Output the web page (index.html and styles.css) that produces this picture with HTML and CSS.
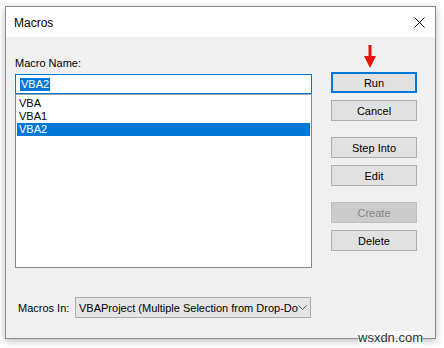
FILE: index.html
```html
<!DOCTYPE html>
<html lang="en">
<head>
  <meta charset="UTF-8" />
  <title>Macros</title>
  <link rel="stylesheet" href="styles.css">
</head>
<body>
  <div class="window">
    <div class="titlebar">
      <span class="title">Macros</span>
      <svg class="close" width="11" height="11" viewBox="0 0 11 11">
        <path d="M0.5 0.5 L10.5 10.5 M10.5 0.5 L0.5 10.5" stroke="#000" stroke-width="1" fill="none"/>
      </svg>
    </div>
    <div class="content">
      <div class="left">
        <div class="label">Macro Name:</div>
        <div class="name-input"><span class="sel">VBA2</span></div>
        <div class="list">
          <div class="item">VBA</div>
          <div class="item">VBA1</div>
          <div class="item active">VBA2</div>
        </div>
        <div class="macros-in">
          <span class="in-label">Macros In:</span>
          <div class="dropdown">
            <span class="dd-text">VBAProject (Multiple Selection from Drop-Down List)</span>
            <svg class="chev" width="9" height="5" viewBox="0 0 9 5">
              <path d="M0.5 0.5 L4.5 4.5 L8.5 0.5" stroke="#555" stroke-width="1" fill="none"/>
            </svg>
          </div>
        </div>
      </div>
      <div class="right">
        <svg class="arrow" width="12" height="24" viewBox="0 0 12 24">
          <rect x="4.5" y="0" width="3" height="13" fill="#e8120c"/>
          <path d="M0 11 L12 11 L6 23 Z" fill="#e8120c"/>
        </svg>
        <button class="btn default">Run</button>
        <button class="btn">Cancel</button>
        <button class="btn group">Step Into</button>
        <button class="btn">Edit</button>
        <button class="btn group" disabled>Create</button>
        <button class="btn">Delete</button>
      </div>
    </div>
  </div>
  <div class="watermark">wsxdn.com</div>
</body>
</html>
```

FILE: styles.css
```css
body {
  margin: 0;
  padding: 6px 0 0 5px;
  background: #fff;
  font-family: "Liberation Sans", Arial, sans-serif;
  font-size: 11px;
  color: #000;
  width: 444px;
  height: 348px;
  box-sizing: border-box;
  position: relative;
  overflow: hidden;
}
.window {
  width: 431px;
  height: 333px;
  box-sizing: border-box;
  border: 1px solid #8c8c8c;
  background: #f0f0f0;
  box-shadow: 0 2px 7px rgba(0, 0, 0, 0.28);
  display: flex;
  flex-direction: column;
}
.titlebar {
  height: 30px;
  background: #fff;
  display: flex;
  align-items: center;
  justify-content: space-between;
  padding: 0 10px 0 8px;
  flex-shrink: 0;
}
.title {
  font-size: 12px;
  margin-top: 1px;
}
.close {
  display: block;
}
.content {
  display: flex;
  padding-left: 9px;
}
.left {
  width: 297px;
  padding-top: 20px;
}
.label {
  line-height: 13px;
  height: 13px;
  margin-bottom: 4px;
}
.name-input {
  height: 20px;
  box-sizing: border-box;
  border: 1px solid #0078d7;
  background: #fff;
  padding: 3px 0 0 4px;
  line-height: 13px;
}
.sel {
  background: #0078d7;
  color: #fff;
  display: inline-block;
  padding: 0 1px;
}
.list {
  height: 174px;
  box-sizing: border-box;
  border: 1px solid #828790;
  border-top-color: #a0a0a0;
  background: #fff;
  padding: 2px 1px;
}
.item {
  height: 13px;
  line-height: 13px;
  padding-left: 2px;
}
.item.active {
  background: #0078d7;
  color: #fff;
}
.macros-in {
  display: flex;
  align-items: center;
  margin-top: 29px;
}
.in-label {
  width: 57px;
  padding-left: 3px;
}
.dropdown {
  width: 236px;
  height: 21px;
  box-sizing: border-box;
  border: 1px solid #adadad;
  background: #e5e5e5;
  display: flex;
  align-items: center;
  padding: 0 5px 0 3px;
  overflow: hidden;
}
.dd-text {
  white-space: nowrap;
  overflow: hidden;
  width: 219px;
  flex-shrink: 0;
}
.chev {
  margin-left: auto;
  flex-shrink: 0;
}
.right {
  position: relative;
  width: 86px;
  margin-left: 19px;
  padding-top: 35px;
  display: flex;
  flex-direction: column;
}
.arrow {
  position: absolute;
  left: 33px;
  top: 8px;
}
.btn {
  width: 86px;
  height: 21px;
  box-sizing: border-box;
  border: 1px solid #adadad;
  background: #e1e1e1;
  font-family: inherit;
  font-size: 11px;
  color: #000;
  padding: 0;
  margin: 7px 0 0;
}
.btn.default {
  border: 2px solid #0078d7;
  margin-top: 0;
}
.btn.group {
  margin-top: 16px;
}
.btn:disabled {
  background: #cccccc;
  border-color: #bfbfbf;
  color: #838383;
}
.watermark {
  position: absolute;
  left: 358px;
  top: 331px;
  font-size: 13px;
  color: #333;
  background: rgba(255, 255, 255, 0.7);
  line-height: 14px;
}
```
